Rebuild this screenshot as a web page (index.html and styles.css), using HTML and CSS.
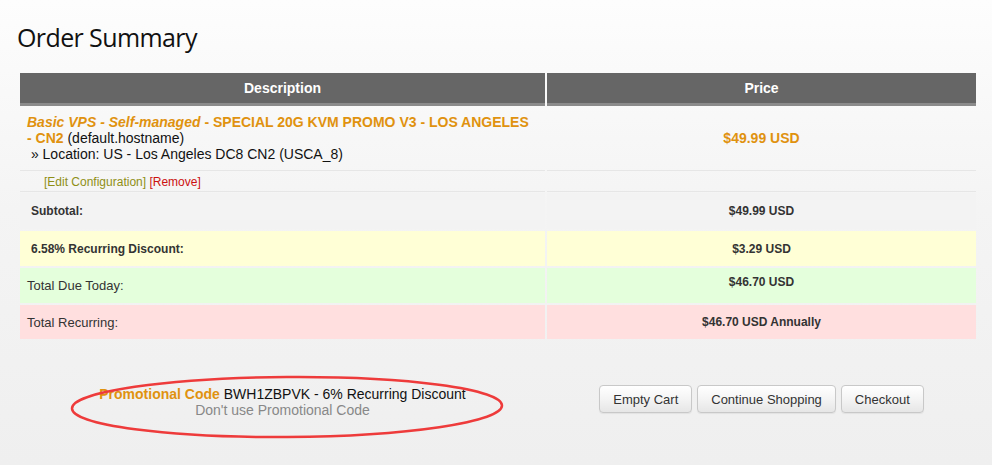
FILE: index.html
```html
<!DOCTYPE html>
<html>
<head>
<meta charset="utf-8">
<link rel="stylesheet" href="styles.css">
</head>
<body>
<div class="page">
  <h1 class="title">Order Summary</h1>
  <div class="cart">
    <div class="row head">
      <div class="cell">Description</div>
      <div class="cell">Price</div>
    </div>
    <div class="row product">
      <div class="cell desc">
        <div><span class="pname"><em>Basic VPS - Self-managed</em> - SPECIAL 20G KVM PROMO V3 - LOS ANGELES - CN2</span> (default.hostname)</div>
        <div>&nbsp;» Location: US - Los Angeles DC8 CN2 (USCA_8)</div>
      </div>
      <div class="cell price">$49.99 USD</div>
    </div>
    <div class="row actions">
      <div class="cell"><a class="edit">[Edit Configuration]</a> <a class="remove">[Remove]</a></div>
      <div class="cell"></div>
    </div>
    <div class="row total subtotal">
      <div class="cell label indent">Subtotal:</div>
      <div class="cell amount">$49.99 USD</div>
    </div>
    <div class="row total discount">
      <div class="cell label indent">6.58% Recurring Discount:</div>
      <div class="cell amount">$3.29 USD</div>
    </div>
    <div class="row total due">
      <div class="cell label plain">Total Due Today:</div>
      <div class="cell amount raised">$46.70 USD</div>
    </div>
    <div class="row total recurring">
      <div class="cell label plain">Total Recurring:</div>
      <div class="cell amount">$46.70 USD Annually</div>
    </div>
  </div>
  <div class="footer">
    <div class="promo">
      <div><span class="promo-label">Promotional Code</span> BWH1ZBPVK - 6% Recurring Discount</div>
      <div class="promo-remove">Don't use Promotional Code</div>
      <svg class="circle" width="440" height="68" viewBox="0 0 440 68">
        <ellipse cx="218" cy="34" rx="215" ry="30" fill="none" stroke="#ee3b3b" stroke-width="2.5" transform="rotate(-0.4 218 34)"/>
      </svg>
    </div>
    <div class="buttons">
      <button class="btn">Empty Cart</button>
      <button class="btn">Continue Shopping</button>
      <button class="btn">Checkout</button>
    </div>
  </div>
</div>
</body>
</html>
```
FILE: styles.css
```css
html, body {
  margin: 0;
  padding: 0;
}
body {
  width: 992px;
  height: 465px;
  overflow: hidden;
  background: linear-gradient(to bottom, #fdfdfd 0%, #f4f4f4 45%, #efefef 100%);
  font-family: "Liberation Sans", Arial, sans-serif;
  color: #222;
}
.page {
  position: relative;
  padding: 20px 16px 0 20px;
}
.title {
  margin: 0 0 0 -3px;
  font-family: "Open Sans", "Noto Sans", sans-serif;
  font-weight: 400;
  font-size: 25px;
  line-height: 34px;
  color: #111;
  letter-spacing: -0.6px;
}
.cart {
  margin-top: 19px;
  width: 956px;
}
.row {
  display: grid;
  grid-template-columns: 525px 429px;
  column-gap: 2px;
}
.cell {
  box-sizing: border-box;
}
.head .cell {
  background: #666;
  border-bottom: 3px solid #8b8b8b;
  height: 33px;
  line-height: 30px;
  text-align: center;
  color: #fff;
  font-weight: bold;
  font-size: 14px;
}
.product .cell {
  border-bottom: 1px solid #e6e6e6;
  height: 65px;
}
.desc {
  padding: 8px 10px 0 7px;
  font-size: 14px;
  line-height: 16px;
  color: #111;
}
.pname {
  color: #e0920f;
  font-weight: bold;
}
.pname em {
  font-style: italic;
}
.price {
  display: flex;
  align-items: center;
  justify-content: center;
  color: #e0920f;
  font-weight: bold;
  font-size: 14px;
}
.actions .cell {
  height: 21px;
  border-bottom: 1px solid #e6e6e6;
  font-size: 12px;
  line-height: 22px;
  padding-left: 24px;
}
.actions .cell + .cell {
  padding-left: 0;
}
.edit {
  color: #8f8f15;
}
.remove {
  color: #cc1111;
}
.total {
  margin-top: 2px;
}
.total .cell {
  height: 35px;
  display: flex;
  align-items: center;
  font-size: 12px;
  color: #333;
}
.subtotal {
  margin-top: 1px;
}
.subtotal .cell {
  height: 36px;
  background: #f3f3f3;
}
.discount .cell {
  background: #ffffd6;
}
.due .cell {
  background: #e4ffdc;
}
.recurring .cell {
  background: #ffdfdf;
  height: 34px;
}
.label.indent {
  padding-left: 11px;
  font-weight: bold;
}
.total .label.plain {
  padding-left: 7px;
  font-size: 13px;
}
.amount {
  justify-content: center;
  font-weight: bold;
}
.amount.raised {
  padding-bottom: 8px;
}
.footer {
  display: grid;
  grid-template-columns: 525px 429px;
  column-gap: 2px;
  margin-top: 46px;
}
.promo {
  position: relative;
  text-align: center;
  font-size: 14px;
  line-height: 16px;
  padding-top: 1px;
  color: #111;
}
.promo-label {
  color: #e0920f;
  font-weight: bold;
}
.promo-remove {
  color: #888;
}
.circle {
  position: absolute;
  left: 49px;
  top: -12px;
}
.buttons {
  display: flex;
  justify-content: center;
  gap: 5px;
}
.btn {
  height: 28px;
  padding: 0 13px;
  font-family: "Liberation Sans", Arial, sans-serif;
  font-size: 13px;
  color: #333;
  background: linear-gradient(to bottom, #ffffff 0%, #f4f4f4 50%, #e6e6e6 100%);
  border: 1px solid #c8c8c8;
  border-radius: 4px;
  box-shadow: 0 1px 1px rgba(0,0,0,0.06);
}
```
